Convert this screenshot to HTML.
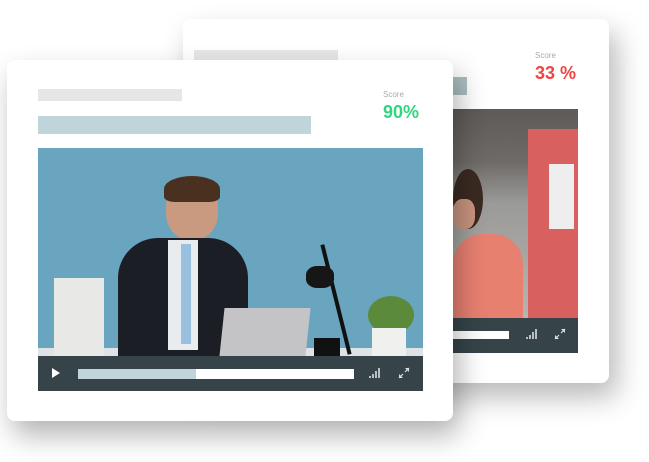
<!DOCTYPE html>
<html><head><style>
*{margin:0;padding:0;box-sizing:border-box}
body{width:649px;height:462px;background:#fff;position:relative;overflow:hidden;font-family:"Liberation Sans",sans-serif}
.card{position:absolute;background:#fff;border-radius:8px}
.abs{position:absolute}
.lbl{font-size:8px;color:#aaa}
</style></head><body>
<!-- back card -->
<div class="card" style="left:183px;top:19px;width:426px;height:364px;box-shadow:8px 14px 28px rgba(0,0,0,0.28)">
  <div class="abs" style="left:11px;top:31px;width:144px;height:10px;background:#e6e6e6"></div>
  <div class="abs" style="left:11px;top:58px;width:273px;height:18px;background:#abbfc2"></div>
  <div class="abs lbl" style="left:352px;top:32px">Score</div>
  <div class="abs" style="left:352px;top:44px;font-size:18px;font-weight:bold;color:#f04545">33 %</div>
  <div class="abs" style="left:270px;top:90px;width:125px;height:209px;background:linear-gradient(180deg,#5e5a58 0%,#6f6a68 25%,#9a9a98 45%,#b8b4b0 100%);overflow:hidden">
    <div class="abs" style="left:75px;top:20px;width:50px;height:190px;background:#d8605e"></div>
    <div class="abs" style="left:96px;top:55px;width:25px;height:65px;background:#eee"></div>
    <div class="abs" style="left:0;top:60px;width:30px;height:60px;border-radius:50%;background:#3a2a22"></div>
    <div class="abs" style="left:0;top:90px;width:22px;height:30px;border-radius:40%;background:#c99480"></div>
    <div class="abs" style="left:0;top:125px;width:70px;height:90px;border-radius:30px 30px 0 0;background:#e88070"></div>
  </div>
  <div class="abs" style="left:270px;top:299px;width:125px;height:35px;background:#36444a">
    <div class="abs" style="left:0;top:13px;width:56px;height:8px;background:#fff"></div>
    <svg class="abs" style="left:73px;top:10px" width="12" height="12" viewBox="0 0 12 12"><path d="M1 11V9M4 11V7M7 11V4M10 11V1" stroke="#ddd" stroke-width="1.6"/></svg>
    <svg class="abs" style="left:101px;top:10px" width="12" height="12" viewBox="0 0 12 12"><path d="M7 1h4v4zM5 11H1V7z" fill="#ddd"/><path d="M11 1L7 5M1 11l4-4" stroke="#ddd" stroke-width="1.2"/></svg>
  </div>
</div>
<!-- front card -->
<div class="card" style="left:7px;top:60px;width:446px;height:361px;box-shadow:6px 14px 28px rgba(0,0,0,0.3)">
  <div class="abs" style="left:31px;top:29px;width:144px;height:12px;background:#e6e6e6"></div>
  <div class="abs" style="left:31px;top:56px;width:273px;height:18px;background:#c0d5d9"></div>
  <div class="abs lbl" style="left:376px;top:30px">Score</div>
  <div class="abs" style="left:376px;top:42px;font-size:18px;font-weight:bold;color:#2fd67f">90%</div>
  <div class="abs" style="left:31px;top:88px;width:385px;height:208px;background:#6aa5c0;overflow:hidden">
    <div class="abs" style="left:0;top:200px;width:385px;height:8px;background:#dde3e6"></div>
    <div class="abs" style="left:16px;top:130px;width:50px;height:78px;background:#e8e8e6"></div>
    <div class="abs" style="left:128px;top:32px;width:52px;height:60px;border-radius:45%;background:#c99a80"></div>
    <div class="abs" style="left:126px;top:28px;width:56px;height:26px;border-radius:50% 50% 20% 20%;background:#4a3020"></div>
    <div class="abs" style="left:80px;top:90px;width:130px;height:118px;border-radius:40px 40px 0 0;background:#1c1e26"></div>
    <div class="abs" style="left:130px;top:92px;width:30px;height:110px;background:#e8ecef"></div>
    <div class="abs" style="left:143px;top:96px;width:10px;height:100px;background:#9ac0e0"></div>
    <div class="abs" style="left:184px;top:160px;width:86px;height:48px;background:#c4c4c6;transform:skewX(-6deg)"></div>
    <div class="abs" style="left:276px;top:190px;width:26px;height:18px;background:#111"></div>
    <div class="abs" style="left:296px;top:95px;width:4px;height:113px;background:#111;transform:rotate(-14deg)"></div>
    <div class="abs" style="left:268px;top:118px;width:28px;height:22px;border-radius:40%;background:#161616"></div>
    <div class="abs" style="left:330px;top:148px;width:46px;height:38px;border-radius:50%;background:#5a8a3a"></div>
    <div class="abs" style="left:334px;top:180px;width:34px;height:28px;background:#f0f0ee"></div>
  </div>
  <div class="abs" style="left:31px;top:296px;width:385px;height:35px;background:#36444a">
    <div class="abs" style="left:14px;top:12px;width:0;height:0;border-left:8px solid #fff;border-top:5px solid transparent;border-bottom:5px solid transparent"></div>
    <div class="abs" style="left:40px;top:13px;width:276px;height:10px;background:#fff"></div>
    <div class="abs" style="left:40px;top:13px;width:118px;height:10px;background:#c0d5d9"></div>
    <svg class="abs" style="left:331px;top:11px" width="12" height="12" viewBox="0 0 12 12"><path d="M1 11V9M4 11V7M7 11V4M10 11V1" stroke="#ddd" stroke-width="1.6"/></svg>
    <svg class="abs" style="left:360px;top:11px" width="12" height="12" viewBox="0 0 12 12"><path d="M7 1h4v4zM5 11H1V7z" fill="#ddd"/><path d="M11 1L7 5M1 11l4-4" stroke="#ddd" stroke-width="1.2"/></svg>
  </div>
</div>
</body></html>
